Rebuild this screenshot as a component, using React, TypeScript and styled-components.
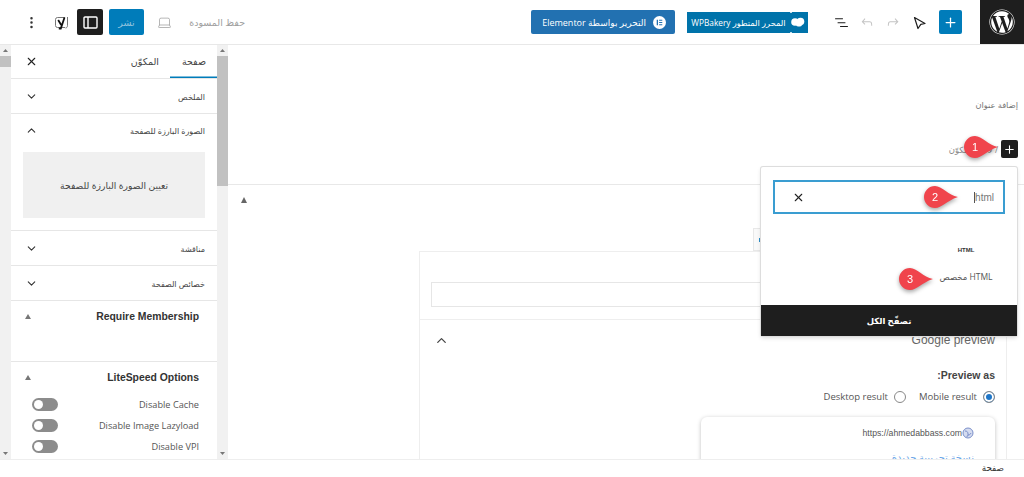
import React from 'react'
import styled, { createGlobalStyle } from 'styled-components'
import { ChevronDown, ChevronUp, Laptop, MoreVertical, Plus, X } from 'lucide-react'
import { FaWordpress } from 'react-icons/fa'

const GlobalStyle = createGlobalStyle`
  html, body {
    margin: 0;
    height: 100%;
    overflow: hidden;
    background: #fff;
  }
`

const ARABIC_STACK = `"Open Sans", "DejaVu Sans", sans-serif`

const Scrollbar: React.FC<{ thumb: number }> = ({ thumb }) => (
  <ScrollTrack>
    <ScrollArrow $dir="up" />
    <ScrollThumb style={{ height: thumb }} />
    <ScrollSpacer />
    <ScrollArrow $dir="down" />
  </ScrollTrack>
)

const SidebarRow: React.FC<{ label: string }> = ({ label }) => (
  <RowHeader>
    <RowLabel>{label}</RowLabel>
    <ChevronDown size={13} strokeWidth={2} color="#333" />
  </RowHeader>
)

const Pin: React.FC<{ n: number; left: number; top: number }> = ({ n, left, top }) => (
  <PinWrap $left={left} $top={top}>
    <svg width="36" height="24" viewBox="0 0 36 24">
      <path d="M12 1a11 11 0 1 0 0 22c7 0 11-7 23-11C25 10 19 1 12 1z" fill="#f0444c" />
    </svg>
    <PinNumber>{n}</PinNumber>
  </PinWrap>
)

const App: React.FC = () => (
  <Page>
    <GlobalStyle />
    <TopBar>
      <LogoBox>
        <FaWordpress size={26} color="#fff" />
      </LogoBox>
      <InserterButton>
        <Plus size={15} strokeWidth={2} color="#fff" />
      </InserterButton>
      <ToolIcon>
        <svg width="15" height="15" viewBox="0 0 15 15" fill="none" stroke="#1e1e1e" strokeWidth="1.2" strokeLinejoin="round">
          <path d="M2.500 2.500L13 8.500L8.800 9.300L6 13.500z" />
        </svg>
      </ToolIcon>
      <ToolIcon>
        <svg width="16" height="16" viewBox="0 0 24 24" fill="#c4c4c4">
          <path d="M15.6 6.5l-1.1 1 2.9 3.3H8c-.9 0-1.7.3-2.3.9-1.4 1.5-1.4 4.2-1.4 5.6v.2h1.5v-.3c0-1.1 0-3.5 1-4.5.3-.3.7-.5 1.3-.5h9.2L14.5 15l1.1 1.1 4.6-4.6-4.6-5z" />
        </svg>
      </ToolIcon>
      <ToolIcon>
        <svg width="16" height="16" viewBox="0 0 24 24" fill="#c4c4c4">
          <path d="M18.3 11.7c-.6-.6-1.4-.9-2.3-.9H6.7l2.9-3.3-1.1-1-4.5 5L8.5 16l1-1-2.7-2.7H16c.5 0 .9.2 1.3.5 1 1 1 3.4 1 4.5v.3h1.5v-.2c0-1.5 0-4.3-1.5-5.7z" />
        </svg>
      </ToolIcon>
      <ToolIcon>
        <svg width="17" height="17" viewBox="0 0 24 24" fill="#1e1e1e">
          <path d="M3 6h11v1.5H3V6zm3.5 5.5h11V13h-11v-1.5zM21 17H10v1.5h11V17z" />
        </svg>
      </ToolIcon>
      <BakeryButton>
        <svg width="14" height="10" viewBox="0 0 14 10" fill="#fff">
          <circle cx="4" cy="5" r="3.800" />
          <circle cx="9.500" cy="4.500" r="3.800" />
          <rect x="5" y="5" width="6" height="4.500" rx="2" />
        </svg>
        <BakeryLabel>المحرر المتطور WPBakery</BakeryLabel>
      </BakeryButton>
      <ElementorButton>
        <svg width="13" height="13" viewBox="0 0 14 14">
          <circle cx="7" cy="7" r="7" fill="#fff" />
          <path d="M4 4h1.4v6H4zM6.6 4H10v1.2H6.6zM6.6 6.4H10v1.2H6.6zM6.6 8.8H10V10H6.6z" fill="#2271b1" />
        </svg>
        <span>التحرير بواسطة Elementor</span>
      </ElementorButton>
      <DocumentTools>
        <SaveDraft>حفظ المسودة</SaveDraft>
        <Laptop size={15} strokeWidth={1} color="#8a8a8a" />
        <PublishButton>نشر</PublishButton>
        <PanelToggle>
          <svg width="15" height="15" viewBox="0 0 15 15" fill="none" stroke="#fff" strokeWidth="1.4">
            <rect x="1" y="2" width="13" height="11" rx="1" />
            <path d="M5 2v11" />
          </svg>
        </PanelToggle>
        <svg width="15" height="15" viewBox="0 0 15 15" fill="none">
          <path d="M11 2.500H3.500A2 2 0 0 0 1.500 4.500v6a2 2 0 0 0 2 2H11" stroke="#666" strokeWidth="0.9" />
          <path d="M13.500 2v8.500c0 1.500-.8 2.500-2 2.500" stroke="#666" strokeWidth="0.9" />
          <path d="M4.200 5L7.200 10M10.500 2.500L6.800 13.500H4.800" stroke="#111" strokeWidth="1.8" />
        </svg>
        <DotsSlot>
          <MoreVertical size={15} strokeWidth={2} color="#333" />
        </DotsSlot>
      </DocumentTools>
    </TopBar>

    <Workspace>
      <Canvas>
        <EditorArea>
          <TitlePlaceholder>إضافة عنوان</TitlePlaceholder>
          <Appender>
            <AppenderPlus>
              <Plus size={13} strokeWidth={2} color="#fff" />
            </AppenderPlus>
            <AppenderHint>/ لاختيار مكوّن</AppenderHint>
          </Appender>
        </EditorArea>
        <MetaBoxes>
          <MetaToggle />
          <YoastTab>
            <YoastTabDot />
          </YoastTab>
          <YoastPanel>
            <KeyphraseSection>
              <KeyphraseInput />
            </KeyphraseSection>
            <PreviewSection>
              <PreviewHeader>
                <PreviewTitle>Google preview</PreviewTitle>
                <ChevronUp size={15} strokeWidth={2} color="#444" />
              </PreviewHeader>
              <PreviewAs>:Preview as</PreviewAs>
              <RadioRow>
                <RadioItem>
                  <Radio $checked />
                  <span>Mobile result</span>
                </RadioItem>
                <RadioItem>
                  <Radio />
                  <span>Desktop result</span>
                </RadioItem>
              </RadioRow>
              <SnippetCard>
                <SnippetUrl>
                  <svg width="12" height="12" viewBox="0 0 12 12" fill="none" stroke="#7b8fc9">
                    <circle cx="6" cy="6" r="5" fill="#d5dcf0" />
                    <path d="M3 4c2 0 3 1 3 3s2 1 3-1M5 10c0-2 1-2 2-2" />
                  </svg>
                  <UrlText>https://ahmedabbass.com</UrlText>
                </SnippetUrl>
                <SnippetTitle>نسخة تجريبية جديدة</SnippetTitle>
              </SnippetCard>
            </PreviewSection>
          </YoastPanel>
        </MetaBoxes>
      </Canvas>

      <Scrollbar thumb={130} />

      <Sidebar>
        <Tabs>
          <Tab $active>صفحة</Tab>
          <Tab>المكوّن</Tab>
          <TabClose>
            <X size={13} strokeWidth={2} color="#222" />
          </TabClose>
        </Tabs>
        <Section>
          <SidebarRow label="الملخص" />
        </Section>
        <Section>
          <FeaturedHeader>
            <RowLabel>الصورة البارزة للصفحة</RowLabel>
            <ChevronUp size={13} strokeWidth={2} color="#333" />
          </FeaturedHeader>
          <FeaturedBox>تعيين الصورة البارزة للصفحة</FeaturedBox>
        </Section>
        <Section>
          <SidebarRow label="مناقشة" />
        </Section>
        <Section>
          <SidebarRow label="خصائص الصفحة" />
        </Section>
        <PluginSection $height={60}>
          <PluginHeader>
            <PluginTitle>Require Membership</PluginTitle>
            <PluginArrow />
          </PluginHeader>
        </PluginSection>
        <PluginSection>
          <PluginHeader>
            <PluginTitle>LiteSpeed Options</PluginTitle>
            <PluginArrow />
          </PluginHeader>
          <ToggleList>
            {['Disable Cache', 'Disable Image Lazyload', 'Disable VPI'].map((label) => (
              <ToggleRow key={label}>
                <span>{label}</span>
                <ToggleTrack />
              </ToggleRow>
            ))}
          </ToggleList>
        </PluginSection>
      </Sidebar>

      <Scrollbar thumb={11} />
    </Workspace>

    <StatusBar>صفحة</StatusBar>

    <InserterPopover>
      <SearchBox>
        <SearchValue>html</SearchValue>
        <X size={13} strokeWidth={2} color="#222" />
      </SearchBox>
      <ResultItem>
        <HtmlGlyph>HTML</HtmlGlyph>
        <ResultLabel>HTML مخصص</ResultLabel>
      </ResultItem>
      <BrowseAll>تصفّح الكل</BrowseAll>
    </InserterPopover>

    <Pin n={1} left={963} top={135} />
    <Pin n={2} left={923} top={185} />
    <Pin n={3} left={898} top={267} />
  </Page>
)

const Page = styled.div`
  position: relative;
  direction: rtl;
  width: 1024px;
  height: 477px;
  display: flex;
  flex-direction: column;
  overflow: hidden;
  background: #fff;
  color: #333;
  font-family: ${ARABIC_STACK};
`

const TopBar = styled.header`
  flex: 0 0 45px;
  box-sizing: border-box;
  display: flex;
  align-items: center;
  padding-left: 20px;
  border-bottom: 1px solid #e8e8e8;
`

const LogoBox = styled.div`
  width: 44px;
  height: 44px;
  margin-left: 18px;
  background: #1e1e1e;
  display: flex;
  align-items: center;
  justify-content: center;
`

const InserterButton = styled.div`
  width: 23px;
  height: 24px;
  border-radius: 2px;
  background: #007cba;
  display: flex;
  align-items: center;
  justify-content: center;
  margin-left: 7px;
`

const ToolIcon = styled.div`
  width: 26px;
  display: flex;
  justify-content: center;
`

const BakeryButton = styled.div`
  position: relative;
  width: 121px;
  height: 21px;
  margin-right: 20px;
  box-sizing: border-box;
  padding: 0 3px;
  background: #0073aa;
  color: #fff;
  font-size: 8.3px;
  display: flex;
  align-items: center;
  gap: 4px;
  white-space: nowrap;

  &::before,
  &::after {
    content: '';
    position: absolute;
    right: 16px;
    width: 2px;
    height: 2px;
    background: #fff;
    border-radius: 50%;
  }

  &::before {
    top: -1px;
  }

  &::after {
    bottom: -1px;
  }
`

const BakeryLabel = styled.span`
  flex: 1;
  text-align: center;
`

const ElementorButton = styled.div`
  width: 144px;
  height: 24px;
  margin-right: 12px;
  box-sizing: border-box;
  padding: 0 9px;
  border-radius: 2px;
  background: #2271b1;
  color: #fff;
  font-size: 9px;
  display: flex;
  align-items: center;
  gap: 7px;
  white-space: nowrap;
`

const DocumentTools = styled.div`
  margin-right: auto;
  display: flex;
  align-items: center;
`

const SaveDraft = styled.span`
  width: 55px;
  margin-left: 18px;
  font-size: 9.5px;
  color: #a0a0a0;
  white-space: nowrap;
`

const PublishButton = styled.div`
  width: 35px;
  height: 26px;
  margin-right: 13px;
  margin-left: 6px;
  border-radius: 2px;
  background: #007cba;
  color: #8fc2de;
  font-size: 9.5px;
  display: flex;
  align-items: center;
  justify-content: center;
`

const PanelToggle = styled.div`
  width: 26px;
  height: 26px;
  margin-left: 8px;
  border-radius: 2px;
  background: #1e1e1e;
  display: flex;
  align-items: center;
  justify-content: center;
`

const DotsSlot = styled.div`
  width: 22px;
  margin-right: 12px;
  display: flex;
  justify-content: center;
`

const Workspace = styled.main`
  flex: 1;
  min-height: 0;
  display: flex;
`

const Canvas = styled.div`
  flex: 1;
  min-width: 0;
  display: flex;
  flex-direction: column;
  overflow: hidden;
`

const EditorArea = styled.div`
  flex: 0 0 140px;
  box-sizing: border-box;
  padding: 53px 6px 0 0;
  border-bottom: 1px solid #e8e8e8;
`

const TitlePlaceholder = styled.div`
  height: 13px;
  line-height: 13px;
  font-size: 8.3px;
  color: #777;
`

const Appender = styled.div`
  margin-top: 29px;
  display: flex;
  align-items: center;
  gap: 3px;
`

const AppenderPlus = styled.div`
  width: 17px;
  height: 18px;
  border-radius: 2px;
  background: #1e1e1e;
  display: flex;
  align-items: center;
  justify-content: center;
`

const AppenderHint = styled.span`
  font-size: 8.5px;
  color: #888;
`

const MetaBoxes = styled.div`
  flex: 1;
  display: flex;
  flex-direction: column;
`

const MetaToggle = styled.div`
  align-self: flex-end;
  width: 0;
  height: 0;
  margin: 12px 0 25px 13px;
  border-left: 3.5px solid transparent;
  border-right: 3.5px solid transparent;
  border-bottom: 6px solid #666;
`

const YoastTab = styled.div`
  align-self: flex-end;
  box-sizing: border-box;
  width: 60px;
  height: 23px;
  margin-left: 525px;
  background: #f9f9f9;
  border: 1px solid #e8e8e8;
  display: flex;
  align-items: center;
  justify-content: flex-end;
  padding-left: 5px;
`

const YoastTabDot = styled.div`
  width: 3px;
  height: 4px;
  background: #2e8fc7;
`

const YoastPanel = styled.div`
  box-sizing: border-box;
  width: 588px;
  margin-right: 17px;
  flex: 1;
  border: 1px solid #eee;
  border-bottom: none;
`

const KeyphraseSection = styled.div`
  box-sizing: border-box;
  height: 68px;
  padding: 30px 11px 0;
  border-bottom: 1px solid #eee;
`

const KeyphraseInput = styled.div`
  box-sizing: border-box;
  height: 25px;
  border: 1px solid #e6e6e6;
`

const PreviewSection = styled.div`
  display: flex;
  flex-direction: column;
  padding: 0 11px;
`

const PreviewHeader = styled.div`
  height: 40px;
  display: flex;
  align-items: center;
  justify-content: space-between;
  padding-left: 3px;
`

const PreviewTitle = styled.span`
  font-family: 'Liberation Sans', sans-serif;
  font-size: 12px;
  color: #666;
`

const PreviewAs = styled.div`
  margin-top: 9px;
  font-family: 'Liberation Sans', sans-serif;
  font-size: 10.5px;
  font-weight: 700;
  color: #444;
  direction: ltr;
  text-align: right;
`

const RadioRow = styled.div`
  margin-top: 9px;
  display: flex;
  gap: 13px;
  font-size: 9.5px;
  color: #555;
`

const RadioItem = styled.label`
  display: flex;
  align-items: center;
  gap: 6px;
`

const Radio = styled.span<{ $checked?: boolean }>`
  box-sizing: border-box;
  width: 12px;
  height: 12px;
  border-radius: 50%;
  border: 1px solid #888;
  background: ${({ $checked }) => ($checked ? '#1f76c8' : '#fff')};
  box-shadow: ${({ $checked }) => ($checked ? 'inset 0 0 0 2px #fff' : 'none')};
`

const SnippetCard = styled.div`
  box-sizing: border-box;
  width: 294px;
  height: 90px;
  margin-top: 14px;
  padding: 10px 21px;
  border-radius: 6px;
  background: #fff;
  box-shadow: 0 1px 4px rgba(0, 0, 0, 0.25);
`

const SnippetUrl = styled.div`
  display: flex;
  align-items: center;
`

const UrlText = styled.span`
  font-family: 'Liberation Sans', sans-serif;
  font-size: 8.7px;
  color: #555;
`

const SnippetTitle = styled.div`
  margin-top: 11px;
  font-size: 10px;
  color: #6aa5e8;
`

const Sidebar = styled.aside`
  flex: 0 0 206px;
  box-sizing: border-box;
  display: flex;
  flex-direction: column;
  overflow: hidden;
`

const Tabs = styled.div`
  flex: 0 0 34px;
  box-sizing: border-box;
  display: flex;
  border-bottom: 1px solid #e6e6e6;
  align-items: stretch;
`

const Tab = styled.div<{ $active?: boolean }>`
  padding: 0 11px;
  min-width: 25px;
  display: flex;
  align-items: center;
  font-size: 9.5px;
  color: #444;
  box-shadow: ${({ $active }) => ($active ? 'inset 0 -1.5px 0 #007cba' : 'none')};
`

const TabClose = styled.div`
  margin-right: auto;
  padding-left: 14px;
  display: flex;
  align-items: center;
`

const Section = styled.section`
  flex: 0 0 auto;
  border-bottom: 1px solid #e6e6e6;
`

const RowHeader = styled.div`
  height: 34px;
  padding: 0 12px 0 14px;
  display: flex;
  align-items: center;
  justify-content: space-between;
`

const FeaturedHeader = styled(RowHeader)`
  height: 33px;
  margin-bottom: 5px;
`

const RowLabel = styled.span`
  font-size: 8px;
  color: #444;
`

const FeaturedBox = styled.div`
  height: 66px;
  margin: 0 12px 12px 12px;
  background: #f0f0f0;
  display: flex;
  align-items: center;
  justify-content: center;
  font-size: 9.2px;
  color: #444;
`

const PluginSection = styled.section<{ $height?: number }>`
  flex: 0 0 auto;
  height: ${({ $height }) => ($height ? `${$height}px` : 'auto')};
  border-bottom: ${({ $height }) => ($height ? '1px solid #e6e6e6' : 'none')};
`

const PluginHeader = styled.div`
  height: 30px;
  padding: 0 18px 0 14px;
  display: flex;
  align-items: center;
  justify-content: space-between;
`

const PluginTitle = styled.span`
  font-family: 'Liberation Sans', sans-serif;
  font-size: 10.4px;
  font-weight: 700;
  color: #333;
`

const PluginArrow = styled.span`
  width: 0;
  height: 0;
  border-left: 3px solid transparent;
  border-right: 3px solid transparent;
  border-bottom: 5px solid #777;
`

const ToggleList = styled.div`
  padding-top: 2px;
`

const ToggleRow = styled.div`
  height: 21px;
  padding: 0 18px 0 21px;
  display: flex;
  align-items: center;
  justify-content: space-between;
  font-size: 9.2px;
  color: #555;
`

const ToggleTrack = styled.span`
  position: relative;
  width: 26px;
  height: 13px;
  border-radius: 7px;
  background: #8c8c8c;

  &::after {
    content: '';
    position: absolute;
    left: 2px;
    top: 2px;
    width: 9px;
    height: 9px;
    border-radius: 50%;
    background: #fff;
  }
`

const ScrollTrack = styled.div`
  flex: 0 0 11px;
  background: #f1f1f1;
  display: flex;
  flex-direction: column;
  align-items: center;
`

const ScrollArrow = styled.div<{ $dir: 'up' | 'down' }>`
  flex: 0 0 11px;
  box-sizing: border-box;
  width: 5px;
  background: #777;
  height: 11px;
  background-clip: content-box;
  padding: 4px 0;
  clip-path: ${({ $dir }) =>
    $dir === 'up' ? 'polygon(50% 36%, 100% 64%, 0 64%)' : 'polygon(0 36%, 100% 36%, 50% 64%)'};
`

const ScrollThumb = styled.div`
  width: 100%;
  background: #c1c1c1;
`

const ScrollSpacer = styled.div`
  flex: 1;
`

const StatusBar = styled.footer`
  flex: 0 0 18px;
  box-sizing: border-box;
  padding-right: 20px;
  border-top: 1px solid #eee;
  font-size: 8.8px;
  line-height: 17px;
  color: #333;
`

const InserterPopover = styled.div`
  position: absolute;
  left: 761px;
  top: 167px;
  width: 256px;
  height: 169px;
  box-sizing: border-box;
  display: flex;
  flex-direction: column;
  background: #fff;
  border-radius: 2px;
  box-shadow: 0 0 0 1px #ddd, 0 2px 4px rgba(0, 0, 0, 0.15);
`

const SearchBox = styled.div`
  box-sizing: border-box;
  height: 34px;
  margin: 13px 12px 0 12px;
  padding: 0 9px 0 17px;
  border: 2px solid #3a9dd1;
  display: flex;
  align-items: center;
  justify-content: space-between;
`

const SearchValue = styled.span`
  border-left: 1px solid #555;
  font-family: 'Liberation Sans', sans-serif;
  font-size: 10px;
  color: #777;
`

const ResultItem = styled.div`
  width: 64px;
  height: 91px;
  margin-right: 19px;
  box-sizing: border-box;
  padding-top: 31px;
  display: flex;
  flex-direction: column;
  align-items: center;
  gap: 16px;
`

const HtmlGlyph = styled.span`
  font-family: 'Liberation Sans', sans-serif;
  font-size: 6px;
  line-height: 10px;
  font-weight: 700;
  color: #333;
`

const ResultLabel = styled.span`
  font-size: 8.5px;
  line-height: 12px;
  color: #555;
  white-space: nowrap;
`

const BrowseAll = styled.div`
  margin-top: auto;
  height: 31px;
  background: #1e1e1e;
  color: #fff;
  font-size: 8.5px;
  font-weight: 700;
  display: flex;
  align-items: center;
  justify-content: center;
`

const PinWrap = styled.div<{ $left: number; $top: number }>`
  position: absolute;
  left: ${({ $left }) => $left}px;
  top: ${({ $top }) => $top}px;
  width: 36px;
  height: 24px;
  filter: drop-shadow(0 2px 2px rgba(0, 0, 0, 0.35));
`

const PinNumber = styled.span`
  position: absolute;
  left: 0;
  top: 0;
  width: 24px;
  height: 24px;
  line-height: 24px;
  text-align: center;
  font-family: 'Liberation Sans', sans-serif;
  font-size: 11px;
  color: #fff;
`

export default App
